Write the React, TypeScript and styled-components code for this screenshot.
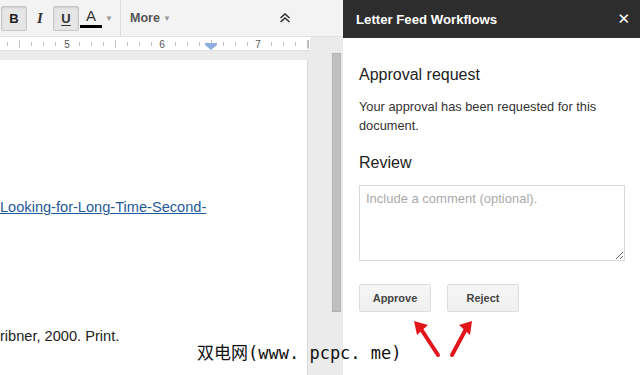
import React from 'react';
import styled, { createGlobalStyle } from 'styled-components';

const GlobalStyle = createGlobalStyle`
  html, body {
    margin: 0;
    padding: 0;
    background: #fff;
  }
  body {
    font-family: "Liberation Sans", Arial, sans-serif;
  }
`;

const Frame = styled.div`
  position: relative;
  display: flex;
  width: 640px;
  height: 375px;
  overflow: hidden;
`;

/* ---------- editor side ---------- */

const Editor = styled.div`
  width: 343px;
  flex: none;
  display: flex;
  flex-direction: column;
  background: #ebebeb;
`;

const Toolbar = styled.div`
  height: 37px;
  flex: none;
  display: flex;
  align-items: center;
  background: #f3f3f3;
  border-bottom: 1px solid #e2e2e2;
  box-sizing: border-box;
`;

const ToolGroup = styled.div`
  display: flex;
  align-items: center;
  height: 100%;
  padding-left: 1px;
  border-right: 1px solid #dcdcdc;
  box-sizing: border-box;
  width: 121px;
`;

const ToolButton = styled.div<{ $active?: boolean }>`
  width: 26px;
  height: 25px;
  display: flex;
  align-items: center;
  justify-content: center;
  box-sizing: border-box;
  border-radius: 2px;
  border: 1px solid ${(p) => (p.$active ? '#c6c6c6' : 'transparent')};
  background: ${(p) => (p.$active ? '#e6e6e6' : 'transparent')};
  box-shadow: ${(p) => (p.$active ? 'inset 0 1px 2px rgba(0,0,0,0.1)' : 'none')};
  color: #222;
  font-size: 13px;
  font-weight: bold;
`;

const Bold = styled.span`
  font-family: "Liberation Sans", Arial, sans-serif;
  font-weight: 900;
  font-size: 13px;
`;

const Italic = styled.span`
  font-family: "Liberation Serif", serif;
  font-style: italic;
  font-weight: bold;
  font-size: 15px;
  color: #333;
`;

const Under = styled.span`
  font-family: "Liberation Sans", Arial, sans-serif;
  text-decoration: underline;
  text-underline-offset: 2px;
  font-size: 13px;
  color: #333;
`;

const ColorA = styled.div`
  width: 22px;
  height: 25px;
  margin-left: 1px;
  display: flex;
  flex-direction: column;
  align-items: center;
  justify-content: flex-end;
  font-size: 15px;
  color: #333;
  line-height: 16px;
  &::after {
    content: '';
    display: block;
    width: 22px;
    height: 3px;
    margin-top: 1px;
    margin-bottom: 3px;
    background: #000;
  }
`;

const Caret = styled.span`
  font-size: 8px;
  color: #999;
  margin-left: 3px;
`;

const MoreMenu = styled.div`
  display: flex;
  align-items: center;
  padding-left: 9px;
  font-size: 12.5px;
  font-weight: bold;
  color: #555;
  flex: 1;
`;

const Collapse = styled.div`
  width: 24px;
  margin-right: 46px;
  display: flex;
  justify-content: center;
`;

const RulerRow = styled.div`
  display: flex;
  height: 14px;
  flex: none;
`;

const RulerStrip = styled.div`
  width: 310px;
  height: 14px;
  background: #fff;
  border-bottom: 1px solid #e0e0e0;
  box-sizing: border-box;
`;

const Workspace = styled.div`
  flex: 1;
  display: flex;
  min-height: 0;
`;

const Page = styled.div`
  width: 308px;
  margin-top: 9px;
  background: #fff;
  border-right: 1px solid #d8d8d8;
  box-sizing: border-box;
  font-size: 14.6px;
  color: #222;
  padding-top: 139px;
`;

const Link = styled.div`
  color: #1f5a99;
  text-decoration: underline;
  line-height: 16px;
`;

const Citation = styled.div`
  margin-top: 113px;
  line-height: 16px;
`;

const ScrollTrack = styled.div`
  flex: 1;
  display: flex;
  justify-content: flex-end;
  padding: 2px 2px 0 0;
`;

const Thumb = styled.div`
  width: 9px;
  height: 259px;
  background: #c0c0c0;
  border: 1px solid #b3b3b3;
  box-sizing: border-box;
`;

/* ---------- side panel ---------- */

const Panel = styled.div`
  flex: 1;
  display: flex;
  flex-direction: column;
  background: #fff;
`;

const PanelHeader = styled.div`
  height: 38px;
  flex: none;
  display: flex;
  align-items: center;
  justify-content: space-between;
  padding: 0 10px 0 13px;
  background: #2d2d2d;
  color: #fff;
  font-size: 13.2px;
  font-weight: bold;
`;

const Close = styled.span`
  font-size: 15px;
  font-weight: bold;
  font-family: "DejaVu Sans", sans-serif;
`;

const PanelBody = styled.div`
  padding: 27px 15px 0 16px;
  color: #222;
`;

const Heading = styled.div<{ $gap?: number }>`
  font-size: 16px;
  line-height: 20px;
  margin-top: ${(p) => p.$gap ?? 0}px;
  color: #222;
`;

const Note = styled.div`
  margin-top: 12px;
  font-size: 12.8px;
  line-height: 19px;
  color: #333;
`;

const Comment = styled.textarea`
  display: block;
  margin-top: 12px;
  width: 266px;
  height: 76px;
  box-sizing: border-box;
  border: 1px solid #d9d9d9;
  padding: 5px 6px;
  font-family: "Liberation Sans", Arial, sans-serif;
  font-size: 13px;
  resize: both;
  outline: none;
  &::placeholder {
    color: #aaa;
  }
`;

const Actions = styled.div`
  display: flex;
  gap: 16px;
  margin-top: 23px;
`;

const ActionButton = styled.button`
  width: 72px;
  height: 28px;
  padding: 0;
  border: 1px solid #dcdcdc;
  border-radius: 2px;
  background: linear-gradient(#f6f6f6, #f0f0f0);
  color: #444;
  font-family: "Liberation Sans", Arial, sans-serif;
  font-size: 11px;
  font-weight: bold;
`;

/* ---------- overlays ---------- */

const Watermark = styled.div`
  position: absolute;
  left: 197px;
  top: 340px;
  font-family: "Noto Sans CJK SC", "DejaVu Sans", sans-serif;
  font-size: 17px;
  line-height: 24px;
  color: #111;
  white-space: nowrap;
`;

const WatermarkLatin = styled.span`
  font-family: "DejaVu Sans Mono", monospace;
  font-size: 17px;
`;

const Arrows = styled.svg`
  position: absolute;
  left: 408px;
  top: 316px;
`;

const Ruler: React.FC = () => {
  const ticks = [];
  for (let x = -5; x <= 308; x += 12) {
    const rel = ((x - 67) % 96 + 96) % 96;
    if (rel === 0) continue;
    const half = rel === 48;
    ticks.push(
      <line key={x} x1={x + 0.5} x2={x + 0.5} y1={half ? 3 : 5} y2={half ? 11 : 9} stroke="#c4c4c4" strokeWidth={1} />,
    );
  }
  return (
    <svg width={310} height={14}>
      {ticks}
      <line x1={308.5} x2={308.5} y1={3} y2={12} stroke="#b8b8b8" />
      {[['5', 67], ['6', 162], ['7', 258]].map(([n, x]) => (
        <text key={n} x={Number(x)} y={11} fontSize={10} fill="#555" textAnchor="middle" fontFamily="Liberation Sans, Arial, sans-serif">
          {n}
        </text>
      ))}
      <rect x={205} y={6} width={12} height={2} fill="#8fb0dc" />
      <polygon points="205,8 217,8 211,13" fill="#8fb0dc" />
    </svg>
  );
};

const App: React.FC = () => {
  return (
    <Frame>
      <GlobalStyle />
      <Editor>
        <Toolbar>
          <ToolGroup>
            <ToolButton $active>
              <Bold>B</Bold>
            </ToolButton>
            <ToolButton>
              <Italic>I</Italic>
            </ToolButton>
            <ToolButton $active>
              <Under>U</Under>
            </ToolButton>
            <ColorA>A</ColorA>
            <Caret>▼</Caret>
          </ToolGroup>
          <MoreMenu>
            More
            <Caret>▼</Caret>
          </MoreMenu>
          <Collapse>
            <svg width="12" height="10" viewBox="0 0 12 10">
              <path d="M1.5 5 L6 1 L10.5 5 M1.5 9 L6 5 L10.5 9" fill="none" stroke="#333" strokeWidth="1.6" />
            </svg>
          </Collapse>
        </Toolbar>
        <RulerRow>
          <RulerStrip>
            <Ruler />
          </RulerStrip>
        </RulerRow>
        <Workspace>
          <Page>
            <Link>Looking-for-Long-Time-Second-</Link>
            <Citation>ribner, 2000. Print.</Citation>
          </Page>
          <ScrollTrack>
            <Thumb />
          </ScrollTrack>
        </Workspace>
      </Editor>
      <Panel>
        <PanelHeader>
          Letter Feed Workflows
          <Close>✕</Close>
        </PanelHeader>
        <PanelBody>
          <Heading>Approval request</Heading>
          <Note>
            Your approval has been requested for this
            <br />
            document.
          </Note>
          <Heading $gap={18}>Review</Heading>
          <Comment placeholder="Include a comment (optional)." />
          <Actions>
            <ActionButton>Approve</ActionButton>
            <ActionButton>Reject</ActionButton>
          </Actions>
        </PanelBody>
      </Panel>
      <Watermark>
        双电网<WatermarkLatin>(www. pcpc. me)</WatermarkLatin>
      </Watermark>
      <Arrows width={72} height={44} viewBox="0 0 72 44">
        <g stroke="#e2141c" strokeWidth={4} strokeLinecap="round" fill="#e2141c">
          <line x1={30} y1={39} x2={13} y2={13} />
          <line x1={44} y1={39} x2={58} y2={13} />
        </g>
        <polygon points="6,5 20,9 9,19" fill="#e2141c" />
        <polygon points="64,5 51,9 62,19" fill="#e2141c" />
      </Arrows>
    </Frame>
  );
};

export default App;
